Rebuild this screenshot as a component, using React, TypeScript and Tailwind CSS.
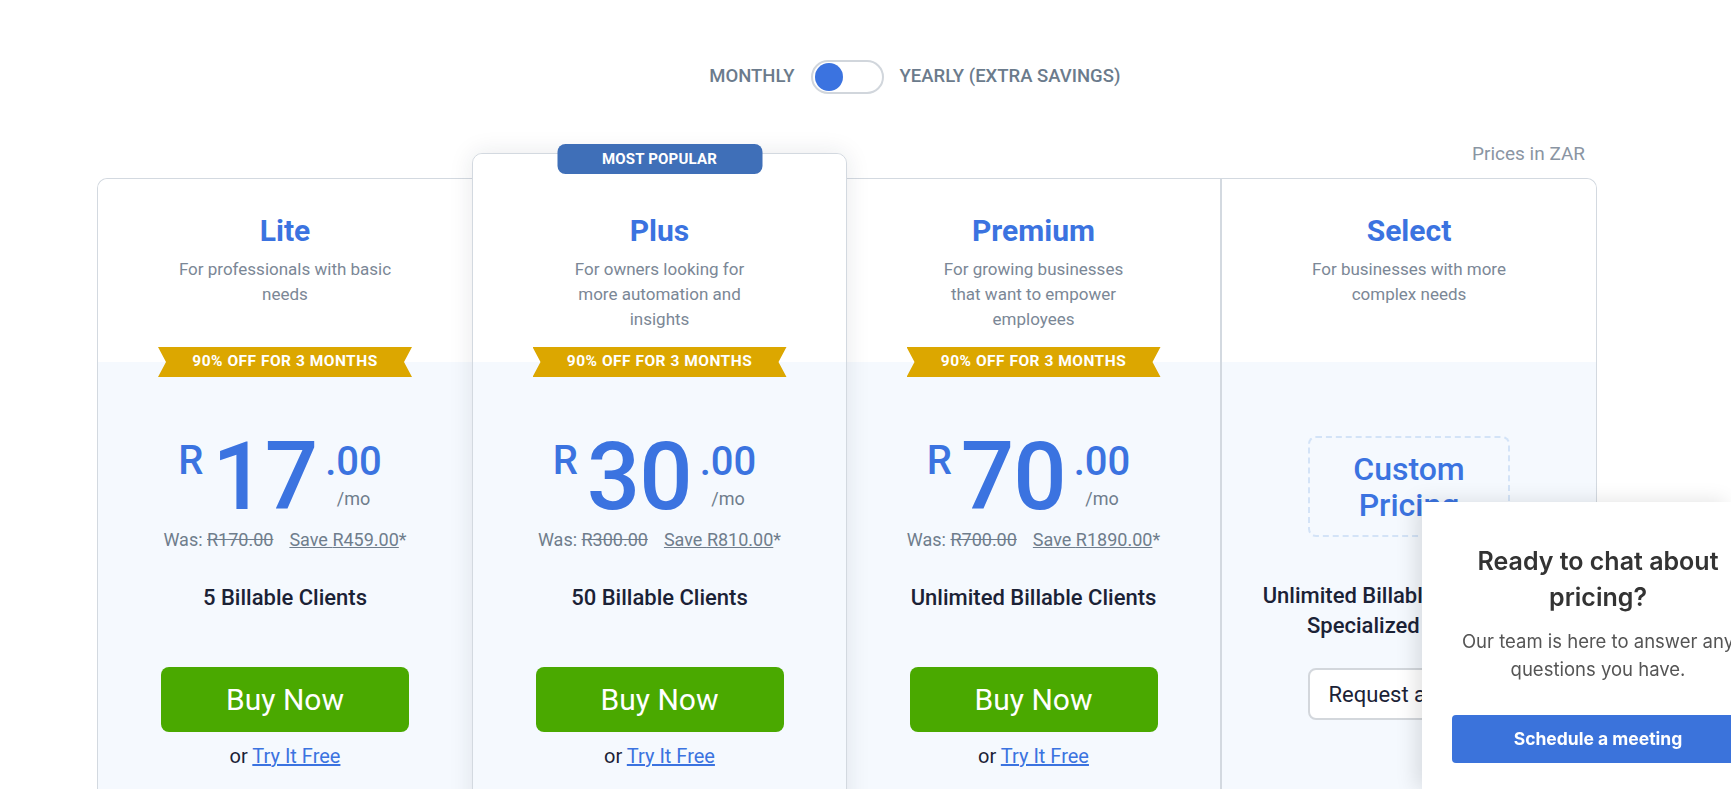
import React from "react";

type Plan = {
  name: string;
  desc: string[];
  price: string;
  was: string;
  save: string;
  clients: string;
  popular?: boolean;
};

const plans: Plan[] = [
  {
    name: "Lite",
    desc: ["For professionals with basic", "needs"],
    price: "17",
    was: "R170.00",
    save: "R459.00",
    clients: "5 Billable Clients",
  },
  {
    name: "Plus",
    desc: ["For owners looking for", "more automation and", "insights"],
    price: "30",
    was: "R300.00",
    save: "R810.00",
    clients: "50 Billable Clients",
    popular: true,
  },
  {
    name: "Premium",
    desc: ["For growing businesses", "that want to empower", "employees"],
    price: "70",
    was: "R700.00",
    save: "R1890.00",
    clients: "Unlimited Billable Clients",
  },
];

function Ribbon() {
  return (
    <div className="-mt-[15px] h-[30px] w-[254px] bg-[#dca700] flex items-center justify-center text-white font-bold text-[15.5px] tracking-[0.5px] [clip-path:polygon(0_0,100%_0,calc(100%_-_8px)_50%,100%_100%,0_100%,8px_50%)]">
      90% OFF FOR 3 MONTHS
    </div>
  );
}

function Header({ plan }: { plan: { name: string; desc: string[] } }) {
  return (
    <>
      <h2 className="text-[30px] leading-[38px] font-bold text-[#3b73e0]">{plan.name}</h2>
      <p className="mt-[7px] text-[17px] leading-[25px] text-[#7b8796] text-center">
        {plan.desc.map((d, i) => (
          <React.Fragment key={i}>
            {d}
            {i < plan.desc.length - 1 && <br />}
          </React.Fragment>
        ))}
      </p>
    </>
  );
}

function PlanColumn({ plan, className }: { plan: Plan; className: string }) {
  const pop = plan.popular;
  return (
    <div className={`relative flex flex-col w-[375px] shrink-0 ${className}`}>
      {pop && (
        <div className="absolute -top-[10px] left-1/2 -translate-x-1/2 w-[205px] h-[30px] rounded-[8px] bg-[#3f6fb8] text-white text-[15px] font-bold flex items-center justify-center tracking-[0.2px]">
          MOST POPULAR
        </div>
      )}
      <div
        className={`bg-white flex flex-col items-center ${
          pop ? "h-[208px] pt-[58px] rounded-t-[10px]" : "h-[183px] pt-[33px] rounded-tl-[10px]"
        }`}
      >
        <Header plan={plan} />
      </div>
      <div className="bg-[#f5f9fe] flex flex-col items-center flex-1 pb-[80px]">
        <Ribbon />
        <div className="mt-[53px] mr-[10px] flex items-start text-[#3b73e0] font-medium">
          <span className="text-[40px] leading-none mt-[11px] mr-[9px]">R</span>
          <span className="text-[94px] leading-none tracking-[-1px]">{plan.price}</span>
          <div className="flex flex-col items-center ml-[8px]">
            <span className="text-[40px] leading-none mt-[12px]">.00</span>
            <span className="text-[18px] leading-none mt-[8px] font-normal text-[#6f7d8c]">/mo</span>
          </div>
        </div>
        <div className="mt-[3px] text-[18px] leading-[26px] text-[#6f7d8c]">
          Was: <span className="line-through">{plan.was}</span>
          <span className="ml-[16px] underline">Save {plan.save}</span>*
        </div>
        <div className="mt-[30px] text-[22px] leading-[30px] font-medium text-[#1b2236]">{plan.clients}</div>
        <button className="mt-[54px] w-[248px] h-[65px] rounded-[8px] bg-[#4aa900] text-white text-[30px]">
          Buy Now
        </button>
        <div className="mt-[10px] text-[20px] leading-[28px] text-[#1b2236]">
          or <span className="text-[#3b73e0] underline">Try It Free</span>
        </div>
      </div>
    </div>
  );
}

export default function App() {
  return (
    <div className="h-screen overflow-hidden bg-white font-['Roboto',sans-serif]">
      <div className="ml-[97px] w-[1500px] pt-[60px]">
        <div className="grid grid-cols-[1fr_auto_1fr] items-center gap-x-[16px]">
          <span className="justify-self-end text-[18.5px] font-medium text-[#6b7b8c]">MONTHLY</span>
          <div className="w-[73px] h-[34px] rounded-full border-2 border-[#d1d6dc] bg-white flex items-center px-[2px]">
            <div className="w-[28px] h-[28px] rounded-full bg-[#3b73e0]" />
          </div>
          <span className="justify-self-start text-[18.5px] font-medium text-[#6b7b8c]">YEARLY (EXTRA SAVINGS)</span>
        </div>
        <div className="mt-[47px] flex justify-end pr-[12px] text-[19px] leading-[26px] text-[#8a95a3]">
          Prices in ZAR
        </div>
        <div className="mt-[11px] flex items-stretch">
          <PlanColumn plan={plans[0]} className="border-l border-t border-[#d3d9e0] rounded-tl-[10px]" />
          <PlanColumn
            plan={plans[1]}
            className="-mt-[25px] z-10 border border-[#d3d9e0] rounded-t-[10px] shadow-[0_0_24px_rgba(30,40,60,0.10)]"
          />
          <PlanColumn plan={plans[2]} className="border-t border-r-2 border-[#d3d9e0]" />
          <div className="flex flex-col w-[375px] shrink-0 border-t border-r border-[#d3d9e0] rounded-tr-[10px]">
            <div className="bg-white h-[183px] pt-[33px] flex flex-col items-center rounded-tr-[10px]">
              <Header plan={{ name: "Select", desc: ["For businesses with more", "complex needs"] }} />
            </div>
            <div className="bg-[#f5f9fe] flex flex-col items-center flex-1 pb-[80px]">
              <div className="-mt-[15px] h-[30px]" />
              <div className="mt-[59px] w-[202px] h-[101px] rounded-[8px] border-2 border-dashed border-[#d3e3f7] flex items-center justify-center text-center text-[32px] leading-[36px] font-medium text-[#3b73e0]">
                Custom
                <br />
                Pricing
              </div>
              <div className="mt-[44px] text-[22px] leading-[30px] font-medium text-[#1b2236] text-center">
                Unlimited Billable Clients with
                <br />
                Specialized Features
              </div>
              <button className="mt-[27px] w-[203px] h-[52px] rounded-[8px] border-2 border-[#d3d7dc] bg-white text-[22px] text-[#1b2236]">
                Request a Demo
              </button>
            </div>
          </div>
        </div>
      </div>

      <div className="fixed left-[1422px] right-0 top-[502px] bottom-0 overflow-hidden bg-white shadow-[-6px_0_20px_rgba(0,0,0,0.12)] font-['Inter',sans-serif]">
        <div className="w-[352px] px-[30px] pt-[41px] flex flex-col items-center text-center">
          <div className="text-[25px] leading-[36px] font-semibold text-[#333333]">
            Ready to chat about
            <br />
            pricing?
          </div>
          <div className="mt-[12px] text-[18.5px] leading-[28px] text-[#555555]">
            Our team is here to answer any
            <br />
            questions you have.
          </div>
          <button className="mt-[32px] w-full h-[48px] rounded-[4px] bg-[#3b73db] text-white text-[17.5px] font-bold">
            Schedule a meeting
          </button>
        </div>
      </div>
    </div>
  );
}
